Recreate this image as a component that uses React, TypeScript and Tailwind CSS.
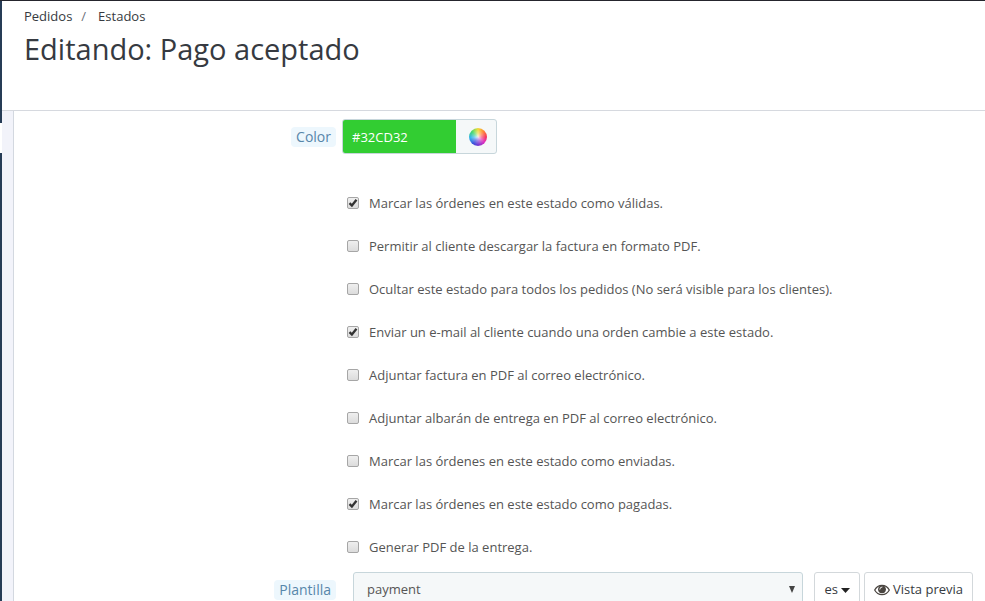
import { useState } from "react";

interface StatusOption {
  id: string;
  label: string;
  checked: boolean;
}

const OPTIONS: StatusOption[] = [
  { id: "logable", label: "Marcar las órdenes en este estado como válidas.", checked: true },
  { id: "invoice", label: "Permitir al cliente descargar la factura en formato PDF.", checked: false },
  { id: "hidden", label: "Ocultar este estado para todos los pedidos (No será visible para los clientes).", checked: false },
  { id: "send_email", label: "Enviar un e-mail al cliente cuando una orden cambie a este estado.", checked: true },
  { id: "pdf_invoice", label: "Adjuntar factura en PDF al correo electrónico.", checked: false },
  { id: "pdf_delivery", label: "Adjuntar albarán de entrega en PDF al correo electrónico.", checked: false },
  { id: "shipped", label: "Marcar las órdenes en este estado como enviadas.", checked: false },
  { id: "paid", label: "Marcar las órdenes en este estado como pagadas.", checked: true },
  { id: "delivery", label: "Generar PDF de la entrega.", checked: false },
];

function FieldLabel({ htmlFor, text }: { htmlFor: string; text: string }) {
  return (
    <div className="w-[322px] shrink-0 flex justify-end">
      <label htmlFor={htmlFor} className="rounded-sm bg-[#edf7fd] px-[5px] text-sm leading-5 text-[#5786aa]">
        {text}
      </label>
    </div>
  );
}

function CheckRow({ option, onToggle }: { option: StatusOption; onToggle: () => void }) {
  return (
    <div className="flex h-[43px] items-center">
      <label className="flex items-center gap-2.5 text-[13px] leading-5 text-[#555]">
        <span className="relative block size-3">
          <input
            type="checkbox"
            name={option.id}
            checked={option.checked}
            onChange={onToggle}
            className="block size-3 appearance-none rounded-xs border border-[#a6a6a6] bg-linear-to-b from-[#efefef] to-[#dcdcdc]"
          />
          {option.checked && (
            <svg viewBox="0 0 12 12" className="pointer-events-none absolute inset-0 size-3" aria-hidden="true">
              <path d="M2.5 6.1 L4.9 8.5 L9.5 2.8" fill="none" stroke="#333" strokeWidth="2.3" />
            </svg>
          )}
        </span>
        {option.label}
      </label>
    </div>
  );
}

export default function App() {
  const [color, setColor] = useState("#32CD32");
  const [options, setOptions] = useState(OPTIONS);

  const toggle = (id: string) => {
    setOptions(options.map(o => (o.id === id ? { ...o, checked: !o.checked } : o)));
  };

  return (
    <div className="flex h-screen overflow-hidden border-t border-[#25252d] bg-white font-['Open_Sans','Liberation_Sans',sans-serif]">
      {/* Edge of the side menu */}
      <div className="flex w-0.5 shrink-0 flex-col bg-[#263c56]">
        <div className="mt-[122px] h-[30px] bg-white"></div>
      </div>

      <div className="flex min-w-0 flex-1 flex-col">
        <header className="h-[110px] shrink-0 border-b border-[#d6d9df] px-[22px] pt-[5px] text-[#363a41]">
          <nav className="flex text-[13px] leading-5">
            <a href="#pedidos">Pedidos</a>
            <span className="pl-[9px] pr-3 text-[#6c7078]">/</span>
            <a href="#estados">Estados</a>
          </nav>
          <h1 className="mt-[3px] text-[29px] leading-10">Editando: Pago aceptado</h1>
        </header>

        <div className="flex flex-1">
          <div className="w-[11px] shrink-0 bg-[#f2f3fa]"></div>

          <form className="min-w-0 flex-1 border-l border-[#d3d8e0]" onSubmit={(e) => e.preventDefault()}>
            <div className="flex items-center gap-1.5 pt-2">
              <FieldLabel htmlFor="color" text="Color" />
              <div className="flex h-[35px] overflow-hidden rounded-[3px] border border-[#c7d6db] bg-[#f5f8f9]">
                <input
                  id="color"
                  type="text"
                  value={color}
                  onChange={(e) => setColor(e.target.value)}
                  style={{ backgroundColor: color }}
                  className="w-[113px] px-[9px] pt-0.5 text-[13px] text-white"
                />
                <button type="button" aria-label="Color" className="flex w-10 items-center justify-center pl-1">
                  <span className="block size-[18px] rounded-full bg-[radial-gradient(circle,#ffffffd9_0%,#ffffff59_30%,#ffffff00_60%),conic-gradient(#f2dc3a,#ff8336_45deg,#f5365f_90deg,#de2fc0_130deg,#7d38d0_175deg,#3f50dc_215deg,#35b4ec_265deg,#45d870_310deg,#f2dc3a)]"></span>
                </button>
              </div>
            </div>

            <div className="mt-[27px] pl-[333px]">
              {options.map(option => (
                <CheckRow key={option.id} option={option} onToggle={() => toggle(option.id)} />
              ))}
            </div>

            <div className="mt-1 flex items-center pr-3">
              <FieldLabel htmlFor="template" text="Plantilla" />
              <div className="relative ml-[17px] min-w-0 flex-1">
                <select
                  id="template"
                  defaultValue="payment"
                  className="block h-9 w-full appearance-none rounded-[3px] border border-[#c7d6db] bg-[#f5f8f9] px-[13px] text-[13px] text-[#555]"
                >
                  <option value="payment">payment</option>
                </select>
                <svg viewBox="0 0 6 7" className="pointer-events-none absolute right-2 top-3.5 h-[7px] w-1.5" aria-hidden="true">
                  <path d="M0 0h6L3 7z" fill="#444" />
                </svg>
              </div>
              <button type="button" className="ml-[11px] flex h-9 items-center gap-[3px] rounded-[3px] border border-[#d3d8db] px-[9px] text-[13px] text-[#363a41]">
                es
                <svg viewBox="0 0 9 5" className="h-[5px] w-[9px]" aria-hidden="true">
                  <path d="M0 0h9L4.500 5z" fill="#222" />
                </svg>
              </button>
              <button type="button" className="ml-1 flex h-9 items-center gap-[3px] rounded-[3px] border border-[#d3d8db] px-[9px] text-[13px] text-[#363a41]">
                <svg viewBox="0 0 16 12" className="h-3 w-4" aria-hidden="true">
                  <path d="M0.700 6C4 -0.200 12 -0.200 15.300 6C12 12.200 4 12.200 0.700 6z" fill="#fff" stroke="#4a4540" strokeWidth="1.300" />
                  <circle cx="8" cy="5.300" r="3.900" fill="#4a4540" />
                  <path d="M5.800 5.200A2.200 2.200 0 0 1 8 3" fill="none" stroke="#fff" strokeWidth="0.900" strokeLinecap="round" />
                </svg>
                Vista previa
              </button>
            </div>
          </form>
        </div>
      </div>
    </div>
  );
}
